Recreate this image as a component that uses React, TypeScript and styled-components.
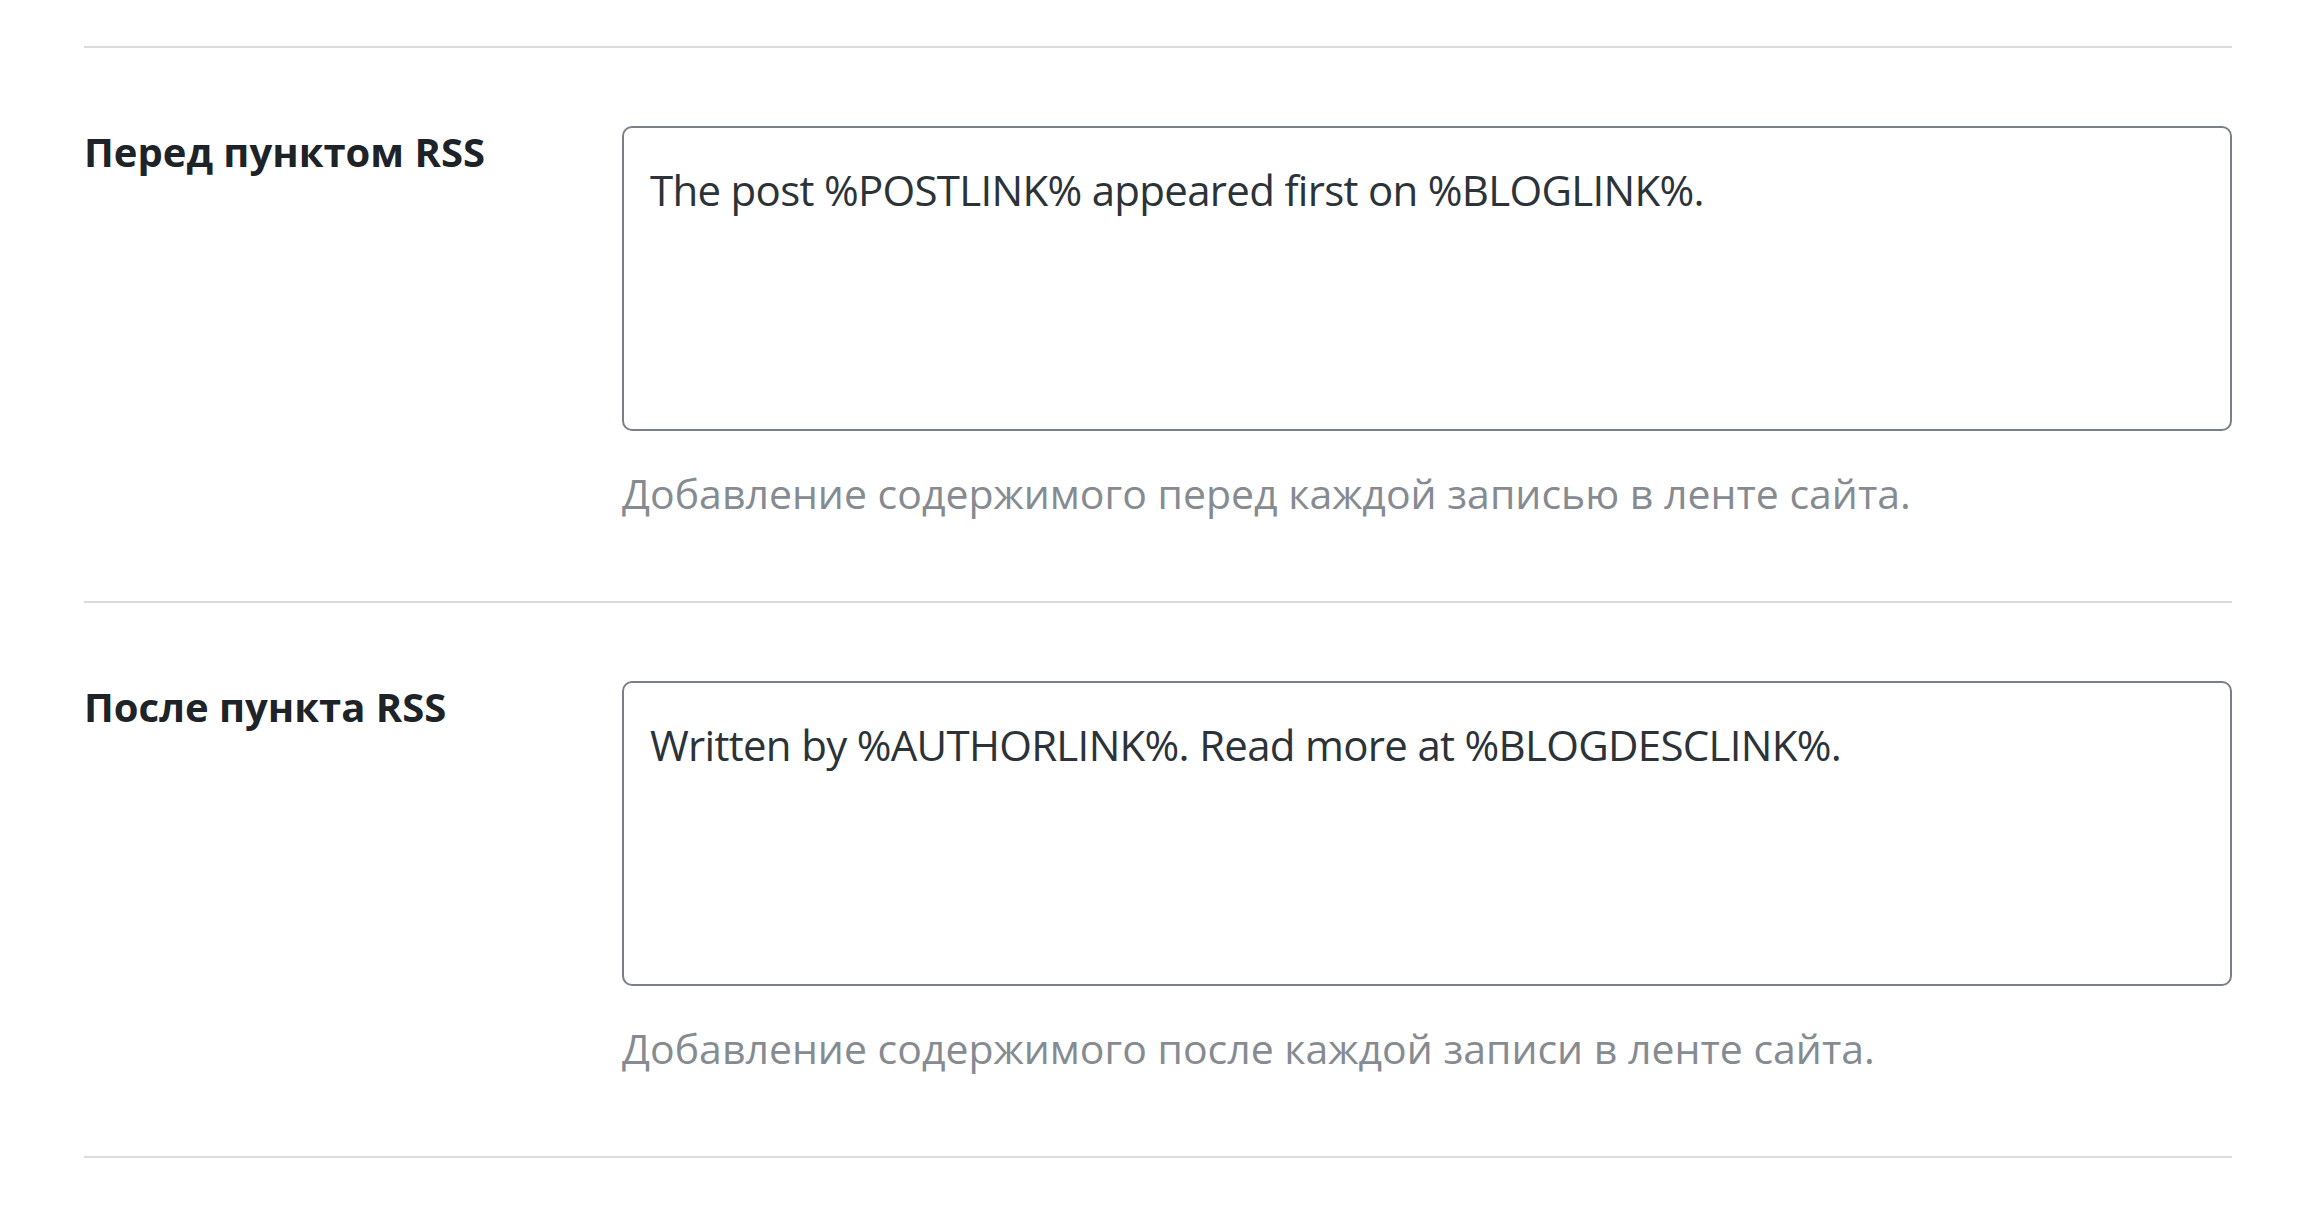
import React from "react";
import styled, { createGlobalStyle } from "styled-components";

const GlobalStyle = createGlobalStyle`
  body {
    margin: 0;
    background: #ffffff;
    font-family: "Open Sans", "Noto Sans", "DejaVu Sans", sans-serif;
  }
`;

const Page = styled.div`
  padding: 46px 84px 0 84px;
`;

const FormTable = styled.div`
  border-top: 2px solid #dcdcde;
`;

const Row = styled.div`
  display: grid;
  grid-template-columns: 538px 1fr;
  padding: 78px 0;
  border-bottom: 2px solid #dcdcde;
`;

const Label = styled.label`
  padding-top: 1px;
  font-size: 40px;
  line-height: 50px;
  font-weight: 700;
  color: #1d2327;
`;

const Field = styled.div`
  display: flex;
  flex-direction: column;
  gap: 32px;
`;

const TextArea = styled.textarea`
  box-sizing: border-box;
  width: 100%;
  height: 305px;
  margin: 0;
  padding: 30px 26px 20px;
  border: 2.5px solid #7a8089;
  border-radius: 10px;
  resize: none;
  font-family: "Open Sans", "Noto Sans", sans-serif;
  font-size: 42px;
  letter-spacing: -0.7px;
  line-height: 1.5;
  color: #2c3338;
  background: #ffffff;
  &:focus {
    outline: none;
  }
`;

const Description = styled.p`
  margin: 0;
  font-size: 41px;
  line-height: 60px;
  color: #868b92;
`;

interface IFeedField {
  id: string;
  label: string;
  value: string;
  hint: string;
}

const fields: IFeedField[] = [
  {
    id: "rssbefore",
    label: "Перед пунктом RSS",
    value: "The post %POSTLINK% appeared first on %BLOGLINK%.",
    hint: "Добавление содержимого перед каждой записью в ленте сайта."
  },
  {
    id: "rssafter",
    label: "После пункта RSS",
    value: "Written by %AUTHORLINK%. Read more at %BLOGDESCLINK%.",
    hint: "Добавление содержимого после каждой записи в ленте сайта."
  }
];

const App: React.FC = () => {
  return (
    <Page>
      <GlobalStyle />
      <FormTable>
        {fields.map(field => (
          <Row key={field.id}>
            <Label htmlFor={field.id}>{field.label}</Label>
            <Field>
              <TextArea id={field.id} defaultValue={field.value} />
              <Description>{field.hint}</Description>
            </Field>
          </Row>
        ))}
      </FormTable>
    </Page>
  );
};

export default App;
